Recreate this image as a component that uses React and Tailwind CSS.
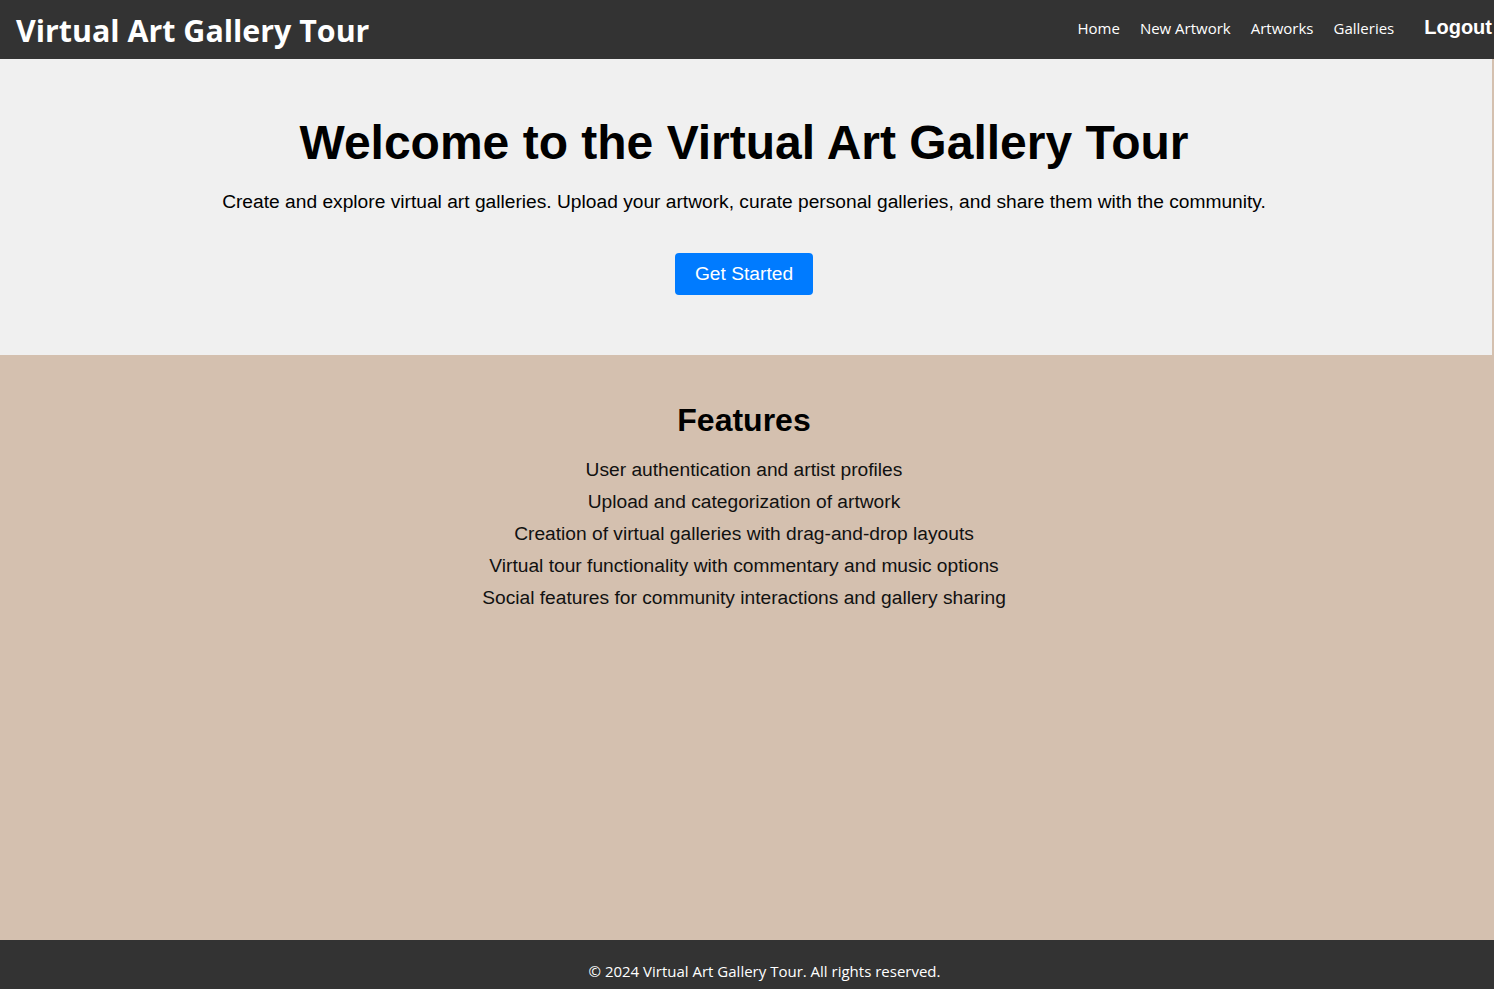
export default function App() {
  const features = [
    "User authentication and artist profiles",
    "Upload and categorization of artwork",
    "Creation of virtual galleries with drag-and-drop layouts",
    "Virtual tour functionality with commentary and music options",
    "Social features for community interactions and gallery sharing",
  ];
  return (
    <div className="min-h-screen flex flex-col bg-[#d4c0af]" style={{ fontFamily: '"Liberation Sans", Arial, sans-serif' }}>
      <header className="h-[59px] bg-[#333333] flex items-center justify-between pl-4 text-white">
        <h1 className="text-[30.4px] font-bold leading-none mt-[3px]" style={{ fontFamily: '"Open Sans", "Noto Sans", sans-serif' }}>
          Virtual Art Gallery Tour
        </h1>
        <nav className="flex items-center mb-[2px]">
          <ul className="flex items-center gap-5 text-[15px]" style={{ fontFamily: '"Open Sans", "Noto Sans", sans-serif' }}>
            <li>Home</li>
            <li>New Artwork</li>
            <li>Artworks</li>
            <li>Galleries</li>
          </ul>
          <button className="ml-[30px] text-[20px] font-bold mb-[4px] pr-[2px]" style={{ fontFamily: '"Liberation Sans", Arial, sans-serif' }}>Logout</button>
        </nav>
      </header>
      <section className="bg-[#f0f0f0] mr-[2px] pr-[4px] h-[296px] flex flex-col items-center pt-[56px] text-black">
        <h2 className="text-[48px] font-bold leading-[56px]">Welcome to the Virtual Art Gallery Tour</h2>
        <p className="text-[19.2px] mt-[19px] leading-[24px]">
          Create and explore virtual art galleries. Upload your artwork, curate personal galleries, and share them with the community.
        </p>
        <button className="mt-[39px] bg-[#007bff] text-white text-[19.2px] w-[138px] h-[42px] rounded-[4px]">Get Started</button>
      </section>
      <section className="flex-1 flex flex-col items-center pt-[45px] pr-[6px] text-black">
        <h3 className="text-[32px] font-bold leading-[40px]">Features</h3>
        <ul className="mt-[14px] flex flex-col items-center text-[19.2px] leading-[32px] text-[#111]">
          {features.map((f) => (
            <li key={f}>{f}</li>
          ))}
        </ul>
      </section>
      <footer className="h-[49px] bg-[#333333] text-white flex items-center justify-center pt-[14px] text-[15px]" style={{ fontFamily: '"Open Sans", "Noto Sans", sans-serif' }}>
        <span className="ml-[35px]">© 2024 Virtual Art Gallery Tour. All rights reserved.</span>
      </footer>
    </div>
  );
}
